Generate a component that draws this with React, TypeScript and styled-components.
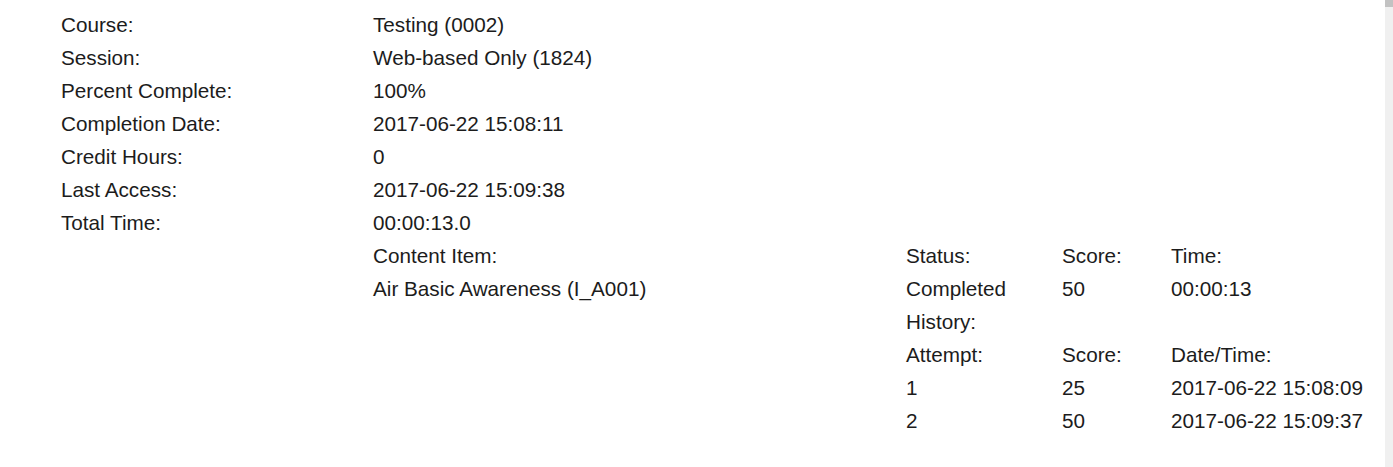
import React from 'react'
import styled, { createGlobalStyle } from 'styled-components'

const GlobalStyle = createGlobalStyle`
  html, body {
    margin: 0;
    padding: 0;
    background: #fff;
  }
  body {
    font-family: 'Liberation Sans', Arial, sans-serif;
    color: #1c1c1c;
  }
`

const details = [
  ['Course:', 'Testing (0002)'],
  ['Session:', 'Web-based Only (1824)'],
  ['Percent Complete:', '100%'],
  ['Completion Date:', '2017-06-22 15:08:11'],
  ['Credit Hours:', '0'],
  ['Last Access:', '2017-06-22 15:09:38'],
  ['Total Time:', '00:00:13.0'],
]

const attempts = [
  ['1', '25', '2017-06-22 15:08:09'],
  ['2', '50', '2017-06-22 15:09:37'],
]

const App = () => {
  return (
    <Page>
      <GlobalStyle />
      <Details>
        {details.map(([label, value]) => (
          <React.Fragment key={label}>
            <Cell>{label}</Cell>
            <Cell>{value}</Cell>
          </React.Fragment>
        ))}
        <Cell />
        <ContentTable>
          <Cell>Content Item:</Cell>
          <Cell>Status:</Cell>
          <Cell>Score:</Cell>
          <Cell>Time:</Cell>

          <Cell>Air Basic Awareness (I_A001)</Cell>
          <Cell>Completed</Cell>
          <Cell>50</Cell>
          <Cell>00:00:13</Cell>

          <Cell />
          <Cell span={3}>History:</Cell>

          <Cell />
          <Cell>Attempt:</Cell>
          <Cell>Score:</Cell>
          <Cell>Date/Time:</Cell>

          {attempts.map(([n, score, when]) => (
            <React.Fragment key={n}>
              <Cell />
              <Cell>{n}</Cell>
              <Cell>{score}</Cell>
              <Cell>{when}</Cell>
            </React.Fragment>
          ))}
        </ContentTable>
      </Details>
      <Scrollbar>
        <Thumb />
      </Scrollbar>
    </Page>
  )
}

const Page = styled.div`
  padding: 8px 0 0 61px;
  min-height: 467px;
  box-sizing: border-box;
`

const Details = styled.div`
  display: grid;
  grid-template-columns: 312px 1fr;
  font-size: 20.7px;
`

const ContentTable = styled.div`
  display: grid;
  grid-template-columns: 533px 156px 109px 1fr;
`

const Cell = styled.div<{ span?: number }>`
  height: 33px;
  display: flex;
  align-items: center;
  white-space: nowrap;
  grid-column: ${(p) => (p.span ? `span ${p.span}` : 'auto')};
`

const Scrollbar = styled.div`
  position: fixed;
  top: 0;
  right: 0;
  width: 8px;
  height: 100vh;
  background: #f0f0f0;
`

const Thumb = styled.div`
  height: 7px;
  background: #c2c2c2;
`

export default App
